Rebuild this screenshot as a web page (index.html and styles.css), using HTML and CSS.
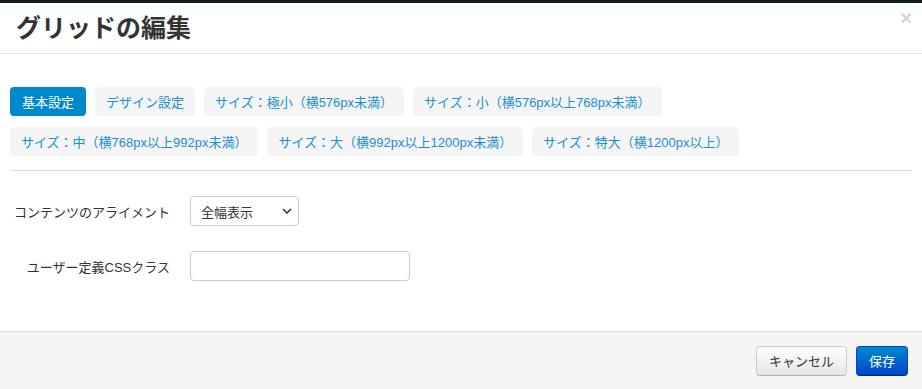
FILE: index.html
```html
<!DOCTYPE html>
<html lang="ja">
<head>
<meta charset="utf-8">
<link rel="stylesheet" href="styles.css">
</head>
<body>
<div class="topstrip"></div>
<div class="dialog">
  <div class="dlg-header">
    <h3 class="dlg-title">グリッドの編集</h3>
    <span class="dlg-close">×</span>
  </div>
  <div class="dlg-body">
    <div class="tabs">
      <span class="tab active">基本設定</span>
      <span class="tab">デザイン設定</span>
      <span class="tab">サイズ：極小（横576px未満）</span>
      <span class="tab">サイズ：小（横576px以上768px未満）</span>
      <span class="tab">サイズ：中（横768px以上992px未満）</span>
      <span class="tab">サイズ：大（横992px以上1200px未満）</span>
      <span class="tab">サイズ：特大（横1200px以上）</span>
    </div>
    <div class="divider"></div>
    <div class="form">
      <div class="form-row">
        <label class="form-label">コンテンツのアライメント</label>
        <div class="select">
          <span>全幅表示</span>
          <svg class="chev" width="10" height="6" viewBox="0 0 10 6"><path d="M1 1 L5 5 L9 1" fill="none" stroke="#333" stroke-width="1.6"/></svg>
        </div>
      </div>
      <div class="form-row row2">
        <label class="form-label">ユーザー定義CSSクラス</label>
        <div class="input"></div>
      </div>
    </div>
  </div>
  <div class="dlg-footer">
    <span class="btn">キャンセル</span>
    <span class="btn primary">保存</span>
  </div>
</div>
</body>
</html>
```
FILE: styles.css
```css
html, body {
  margin: 0;
  padding: 0;
  background: #ffffff;
  font-family: "Liberation Sans", "Noto Sans CJK JP", sans-serif;
  color: #333;
}
.topstrip {
  height: 3px;
  background: #0f1c1c;
}
.dialog {
  display: flex;
  flex-direction: column;
  height: 386px;
}
.dlg-header {
  position: relative;
  height: 50px;
  border-bottom: 1px solid #e5e5e5;
  display: flex;
  align-items: center;
  padding-left: 16px;
}
.dlg-title {
  margin: 0;
  font-size: 25px;
  font-weight: bold;
  color: #333;
  line-height: 30px;
  padding-bottom: 1px;
}
.dlg-close {
  position: absolute;
  right: 10px;
  top: 5px;
  font-size: 20px;
  font-weight: bold;
  color: #d5d5d5;
  line-height: 20px;
}
.dlg-body {
  flex: 1;
  padding: 33px 10px 0 10px;
}
.tabs {
  display: flex;
  flex-wrap: wrap;
  column-gap: 9px;
  row-gap: 11px;
  max-width: 740px;
}
.tab {
  display: inline-flex;
  align-items: center;
  height: 29px;
  padding: 0 11px;
  border-radius: 4px;
  background: #f5f5f5;
  color: #1a8fd1;
  font-size: 13px;
  white-space: nowrap;
}
.tab.active {
  background: #0088cc;
  color: #fff;
  padding: 0 12px;
}
.divider {
  height: 1px;
  background: #dcdcdc;
  margin-top: 14px;
}
.form {
  padding-top: 25px;
}
.form-row {
  display: flex;
  align-items: center;
  gap: 20px;
}
.form-row.row2 {
  margin-top: 25px;
}
.form-label {
  width: 160px;
  text-align: right;
  font-size: 13px;
  color: #333;
}
.select {
  box-sizing: border-box;
  width: 109px;
  height: 30px;
  border: 1px solid #ccc;
  border-radius: 4px;
  display: flex;
  align-items: center;
  justify-content: space-between;
  padding: 0 6px 0 10px;
  font-size: 13px;
  color: #333;
}
.input {
  box-sizing: border-box;
  width: 220px;
  height: 30px;
  border: 1px solid #ccc;
  border-radius: 4px;
}
.dlg-footer {
  height: 58px;
  border-top: 1px solid #ddd;
  background: #f5f5f5;
  display: flex;
  align-items: center;
  justify-content: flex-end;
  gap: 9px;
  padding: 0 14px;
  box-sizing: border-box;
}
.btn {
  box-sizing: border-box;
  height: 30px;
  display: inline-flex;
  align-items: center;
  padding: 0 12px;
  border: 1px solid #ccc;
  border-bottom-color: #b3b3b3;
  border-radius: 4px;
  background: linear-gradient(#ffffff, #e6e6e6);
  font-size: 13px;
  color: #333;
}
.btn.primary {
  background: linear-gradient(#0088cc, #0044cc);
  border-color: #0044cc #0044cc #002a80;
  color: #fff;
}
```
